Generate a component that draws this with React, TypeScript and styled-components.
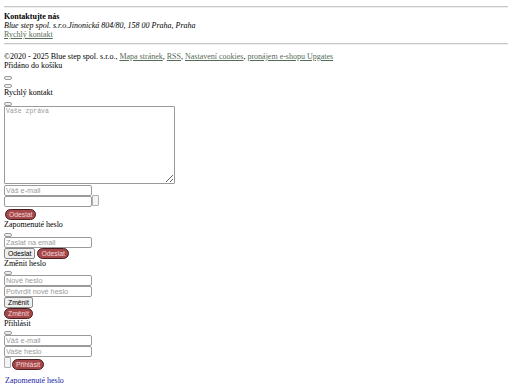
import React from 'react';
import styled, {createGlobalStyle} from "styled-components";

const GlobalStyle = createGlobalStyle`
  html, body {
    margin: 0;
    background: #fff;
  }
  body {
    padding: 6px 4px 0;
    font-family: "Liberation Serif", "Times New Roman", serif;
    font-size: 8px;
    line-height: 9px;
    color: #000;
  }
`

const Rule = styled.hr`
  margin: 0;
  height: 0;
  border: none;
  border-top: 1px solid #c8c8c8;
  border-bottom: 1px solid #eee;
`

const Contact = styled.div`
  display: flex;
  flex-direction: column;
  align-items: flex-start;
  padding: 4px 0;
`

const FooterLink = styled.a`
  color: #566b58;
  text-decoration: underline;
  cursor: pointer;
`

const Copy = styled.p`
  margin: 7px 0 0;
`

const Notice = styled.div``

const Heading = styled.div``

const TinyButton = styled.button`
  display: block;
  width: 8px;
  height: 4px;
  padding: 0;
  margin: ${p => p.$mt ?? 0}px 0 0;
  border: 1px solid #9a9a9a;
  border-radius: 2px;
  background: #efefef;
`

const Block = styled.div`
  display: flex;
  flex-direction: column;
  align-items: flex-start;
`

const Message = styled.textarea`
  width: 171px;
  height: 78px;
  box-sizing: border-box;
  margin: 0 0 1px;
  padding: 1px;
  border: 1px solid #9a9a9a;
  border-radius: 1px;
  font-family: "Liberation Mono", monospace;
  font-size: 6.5px;
  resize: both;

  &::placeholder {
    color: #9a9a9a;
  }
`

const Field = styled.input`
  width: 88px;
  height: 11px;
  box-sizing: border-box;
  margin: 0;
  padding: 0 1px;
  border: 1px solid #9a9a9a;
  border-radius: 2px;
  font-family: "Liberation Sans", Arial, sans-serif;
  font-size: 7.3px;

  &::placeholder {
    color: #9a9a9a;
  }
`

const Row = styled.div`
  display: flex;
  align-items: flex-start;
  gap: ${p => p.$gap ?? 0}px;
`

const Box = styled.span`
  display: block;
  width: 7px;
  height: 11px;
  box-sizing: border-box;
  margin-top: ${p => p.$mt ?? 0}px;
  border: 1px solid #b0b0b0;
  border-radius: 1px;
  background: #f4f4f4;
`

const Plain = styled.button`
  height: 11px;
  box-sizing: border-box;
  margin: 0;
  padding: 0 3px;
  border: 1px solid #8a8a8a;
  border-radius: 2px;
  background: #efefef;
  font-family: "Liberation Sans", Arial, sans-serif;
  font-size: 6.8px;
  line-height: 9px;
  color: #000;
`

const Pill = styled.button`
  height: 11px;
  box-sizing: border-box;
  margin: ${p => p.$mt ?? 0}px 0 0 ${p => p.$ml ?? 1}px;
  padding: 0 3px;
  border: 1px solid #4a1c1e;
  border-radius: 6px;
  background: #a5484c;
  font-family: "Liberation Sans", Arial, sans-serif;
  font-size: 6.8px;
  line-height: 9px;
  color: #f6d6d6;
`

const BlueLink = styled.a`
  display: block;
  margin: 6px 0 0 1px;
  color: #1a1aa6;
  text-decoration: underline;
`

export default function App() {
    return (
        <>
            <GlobalStyle/>
            <footer>
                <Rule/>
                <Contact>
                    <strong>Kontaktujte nás</strong>
                    <em>Blue step spol. s.r.o.Jinonická 804/80, 158 00 Praha, Praha</em>
                    <FooterLink>Rychlý kontakt</FooterLink>
                </Contact>
                <Rule/>
                <Copy>
                    ©2020 - 2025 Blue step spol. s.r.o., <FooterLink> Mapa stránek</FooterLink>,{" "}
                    <FooterLink>RSS</FooterLink>, <FooterLink>Nastavení cookies</FooterLink>,{" "}
                    <FooterLink>pronájem e-shopu Upgates</FooterLink>
                </Copy>
            </footer>

            <Notice>Přidáno do košíku</Notice>
            <TinyButton $mt={6}/>
            <TinyButton $mt={4}/>

            <Block>
                <Heading>Rychlý kontakt</Heading>
                <TinyButton $mt={5}/>
                <Message placeholder="Vaše zpráva"/>
                <Field placeholder="Váš e-mail"/>
                <Row>
                    <Field/>
                    <Box $mt={-1}/>
                </Row>
                <Pill $mt={2}>Odeslat</Pill>
            </Block>

            <Block>
                <Heading>Zapomenuté heslo</Heading>
                <TinyButton $mt={4}/>
                <Field placeholder="Zaslat na email"/>
                <Row $gap={2}>
                    <Plain>Odeslat</Plain>
                    <Pill $ml={0}>Odeslat</Pill>
                </Row>
            </Block>

            <Block>
                <Heading>Změnit heslo</Heading>
                <TinyButton $mt={3}/>
                <Field placeholder="Nové heslo"/>
                <Field placeholder="Potvrdit nové heslo"/>
                <Plain>Změnit</Plain>
                <Pill $ml={0}>Změnit</Pill>
            </Block>

            <Block>
                <Heading>Přihlásit</Heading>
                <TinyButton $mt={3}/>
                <Field placeholder="Váš e-mail"/>
                <Field placeholder="Vaše heslo"/>
                <Row $gap={1}>
                    <Box/>
                    <Pill $ml={0} $mt={2}>Přihlásit</Pill>
                </Row>
            </Block>

            <BlueLink>Zapomenuté heslo</BlueLink>
        </>
    );
}
